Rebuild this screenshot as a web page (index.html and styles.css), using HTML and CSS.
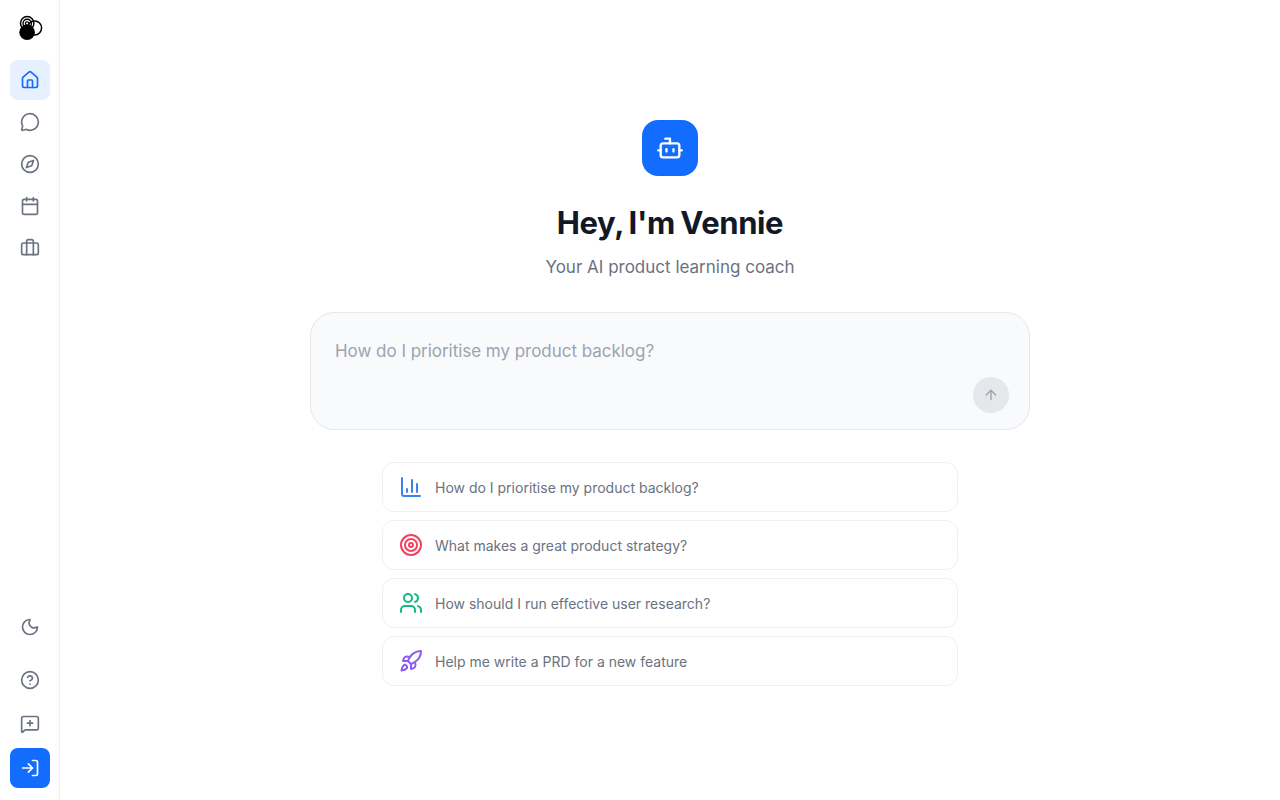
FILE: index.html
```html
<!DOCTYPE html>
<html lang="en">
<head>
    <meta charset="UTF-8">
    <meta name="viewport" content="width=device-width, initial-scale=1.0">
    <title>Vennie</title>
    <link rel="stylesheet" href="styles.css">
</head>
<body>
    <aside class="sidebar">
        <a class="logo" href="#" aria-label="Vennie">
            <svg viewBox="0 0 28 28" width="28" height="28" fill="none" stroke="#000">
                <circle cx="18.6" cy="14" r="7" stroke-width="1.5"/>
                <circle cx="11.2" cy="9.2" r="6.7" stroke-width="1.5"/>
                <circle cx="11.2" cy="9.4" r="4.2" stroke-width="1.4"/>
                <circle cx="11.2" cy="9.6" r="1.8" stroke-width="1.3"/>
                <circle cx="11.1" cy="18.2" r="7.8" fill="#000" stroke="none"/>
            </svg>
        </a>

        <nav class="nav">
            <a class="nav-item active" href="#" aria-label="Home">
                <svg class="icon" viewBox="0 0 24 24"><path d="M15 21v-8a1 1 0 0 0-1-1h-4a1 1 0 0 0-1 1v8"/><path d="M3 10a2 2 0 0 1 .709-1.528l7-5.999a2 2 0 0 1 2.582 0l7 5.999A2 2 0 0 1 21 10v9a2 2 0 0 1-2 2H5a2 2 0 0 1-2-2z"/></svg>
            </a>
            <a class="nav-item" href="#" aria-label="Chat">
                <svg class="icon" viewBox="0 0 24 24"><path d="M2.992 16.342a2 2 0 0 1 .094 1.167l-1.065 3.29a1 1 0 0 0 1.236 1.168l3.413-.998a2 2 0 0 1 1.099.092 10 10 0 1 0-4.777-4.719"/></svg>
            </a>
            <a class="nav-item" href="#" aria-label="Explore">
                <svg class="icon" viewBox="0 0 24 24"><path d="m16.24 7.76-1.804 5.411a2 2 0 0 1-1.265 1.265L7.76 16.24l1.804-5.411a2 2 0 0 1 1.265-1.265z"/><circle cx="12" cy="12" r="10"/></svg>
            </a>
            <a class="nav-item" href="#" aria-label="Events">
                <svg class="icon" viewBox="0 0 24 24"><path d="M8 2v4"/><path d="M16 2v4"/><rect width="18" height="18" x="3" y="4" rx="2"/><path d="M3 10h18"/></svg>
            </a>
            <a class="nav-item" href="#" aria-label="Jobs">
                <svg class="icon" viewBox="0 0 24 24"><path d="M16 20V4a2 2 0 0 0-2-2h-4a2 2 0 0 0-2 2v16"/><rect width="20" height="14" x="2" y="6" rx="2"/></svg>
            </a>
        </nav>

        <div class="sidebar-footer">
            <button class="nav-item theme-toggle" aria-label="Toggle theme">
                <svg class="icon" viewBox="0 0 24 24"><path d="M20.985 12.486a9 9 0 1 1-9.473-9.472c.405-.022.617.46.402.803a6 6 0 0 0 8.268 8.268c.344-.215.825-.004.803.401"/></svg>
            </button>
            <button class="nav-item" aria-label="Help">
                <svg class="icon" viewBox="0 0 24 24"><circle cx="12" cy="12" r="10"/><path d="M9.09 9a3 3 0 0 1 5.83 1c0 2-3 3-3 3"/><path d="M12 17h.01"/></svg>
            </button>
            <button class="nav-item" aria-label="Feedback">
                <svg class="icon" viewBox="0 0 24 24"><path d="M22 17a2 2 0 0 1-2 2H6.828a2 2 0 0 0-1.414.586l-2.202 2.202A.71.71 0 0 1 2 21.286V5a2 2 0 0 1 2-2h16a2 2 0 0 1 2 2z"/><path d="M12 8v6"/><path d="M9 11h6"/></svg>
            </button>
            <a class="nav-item sign-in" href="#" aria-label="Sign in">
                <svg class="icon" viewBox="0 0 24 24"><path d="m10 17 5-5-5-5"/><path d="M15 12H3"/><path d="M15 3h4a2 2 0 0 1 2 2v14a2 2 0 0 1-2 2h-4"/></svg>
            </a>
        </div>
    </aside>

    <main class="main">
        <div class="avatar">
            <svg class="icon" viewBox="0 0 24 24"><path d="M12 8V4H8"/><rect width="16" height="12" x="4" y="8" rx="2"/><path d="M2 14h2"/><path d="M20 14h2"/><path d="M15 13v2"/><path d="M9 13v2"/></svg>
        </div>
        <h1>Hey, I'm Vennie</h1>
        <p class="subtitle">Your AI product learning coach</p>

        <form class="prompt-box">
            <textarea class="prompt-input" rows="1" placeholder="How do I prioritise my product backlog?"></textarea>
            <button class="send" type="button" aria-label="Send" disabled>
                <svg class="icon" viewBox="0 0 24 24"><path d="m5 12 7-7 7 7"/><path d="M12 19V5"/></svg>
            </button>
        </form>

        <div class="suggestions">
            <button class="suggestion">
                <svg class="icon blue" viewBox="0 0 24 24"><path d="M3 3v16a2 2 0 0 0 2 2h16"/><path d="M18 17V9"/><path d="M13 17V5"/><path d="M8 17v-3"/></svg>
                <span>How do I prioritise my product backlog?</span>
            </button>
            <button class="suggestion">
                <svg class="icon red" viewBox="0 0 24 24"><circle cx="12" cy="12" r="10"/><circle cx="12" cy="12" r="6"/><circle cx="12" cy="12" r="2"/></svg>
                <span>What makes a great product strategy?</span>
            </button>
            <button class="suggestion">
                <svg class="icon green" viewBox="0 0 24 24"><path d="M16 21v-2a4 4 0 0 0-4-4H6a4 4 0 0 0-4 4v2"/><circle cx="9" cy="7" r="4"/><path d="M22 21v-2a4 4 0 0 0-3-3.87"/><path d="M16 3.13a4 4 0 0 1 0 7.75"/></svg>
                <span>How should I run effective user research?</span>
            </button>
            <button class="suggestion">
                <svg class="icon purple" viewBox="0 0 24 24"><path d="M4.5 16.5c-1.5 1.26-2 5-2 5s3.74-.5 5-2c.71-.84.7-2.13-.09-2.91a2.18 2.18 0 0 0-2.91-.09z"/><path d="m12 15-3-3a22 22 0 0 1 2-3.95A12.88 12.88 0 0 1 22 2c0 2.72-.78 7.5-6 11a22.35 22.35 0 0 1-4 2z"/><path d="M9 12H4s.55-3.03 2-4c1.62-1.08 5 0 5 0"/><path d="M12 15v5s3.03-.55 4-2c1.08-1.62 0-5 0-5"/></svg>
                <span>Help me write a PRD for a new feature</span>
            </button>
        </div>
    </main>
</body>
</html>
```
FILE: styles.css
```css
* {
    box-sizing: border-box;
}

body {
    margin: 0;
    height: 100vh;
    display: flex;
    font-family: Inter, sans-serif;
    color: #111827;
    background: #fff;
}

button,
textarea {
    font-family: inherit;
    border: none;
    background: none;
    padding: 0;
}

.icon {
    display: block;
    flex-shrink: 0;
    width: 20px;
    height: 20px;
    fill: none;
    stroke: currentColor;
    stroke-width: 2;
    stroke-linecap: round;
    stroke-linejoin: round;
}

.sidebar {
    width: 60px;
    flex-shrink: 0;
    display: flex;
    flex-direction: column;
    align-items: center;
    padding: 14px 0 12px;
    border-right: 1px solid #f0f0f2;
}

.logo {
    height: 28px;
    margin-bottom: 18px;
}

.nav {
    display: flex;
    flex-direction: column;
    gap: 2px;
}

.nav-item {
    width: 40px;
    height: 40px;
    display: flex;
    align-items: center;
    justify-content: center;
    border-radius: 8px;
    color: #6b7280;
    cursor: pointer;
}

.nav-item.active {
    color: #126dff;
    background: #e7f0ff;
}

.sidebar-footer {
    margin-top: auto;
    display: flex;
    flex-direction: column;
    gap: 4px;
}

.theme-toggle {
    margin-bottom: 9px;
}

.sign-in {
    color: #fff;
    background: #126dff;
}

.main {
    flex: 1;
    display: flex;
    flex-direction: column;
    align-items: center;
    padding-top: 120px;
}

.avatar {
    width: 56px;
    height: 56px;
    display: flex;
    align-items: center;
    justify-content: center;
    border-radius: 16px;
    color: #fff;
    background: #126dff;
}

.avatar .icon {
    width: 28px;
    height: 28px;
}

h1 {
    margin: 28px 0 12px;
    font-size: 31px;
    line-height: 38px;
    font-weight: 700;
    letter-spacing: -0.4px;
    word-spacing: -1.5px;
}

.subtitle {
    margin: 0 0 32px;
    font-size: 17px;
    line-height: 26px;
    color: #6b7280;
}

.prompt-box {
    width: 720px;
    height: 118px;
    display: flex;
    flex-direction: column;
    padding: 24px 20px 16px 24px;
    border: 1px solid #e5e7eb;
    border-radius: 24px;
    background: #f9fafc;
}

.prompt-input {
    height: 28px;
    resize: none;
    outline: none;
    overflow: hidden;
    font-size: 17px;
    line-height: 28px;
    letter-spacing: -0.03px;
    color: #111827;
}

.prompt-input::placeholder {
    color: #9ca3af;
}

.send {
    width: 36px;
    height: 36px;
    margin-top: auto;
    align-self: flex-end;
    display: flex;
    align-items: center;
    justify-content: center;
    border-radius: 50%;
    color: #9ca3af;
    background: #e5e7eb;
}

.send .icon {
    width: 16px;
    height: 16px;
}

.suggestions {
    width: 576px;
    margin-top: 32px;
    display: flex;
    flex-direction: column;
    gap: 8px;
}

.suggestion {
    height: 50px;
    display: flex;
    align-items: center;
    gap: 12px;
    padding: 0 16px;
    border: 1px solid #f0f0f2;
    border-radius: 12px;
    font-size: 14px;
    color: #6b7280;
    cursor: pointer;
}

.suggestion .icon {
    width: 24px;
    height: 24px;
}

.blue {
    color: #3b82f6;
}

.red {
    color: #f43f5e;
}

.green {
    color: #10b981;
}

.purple {
    color: #8b5cf6;
}
```
